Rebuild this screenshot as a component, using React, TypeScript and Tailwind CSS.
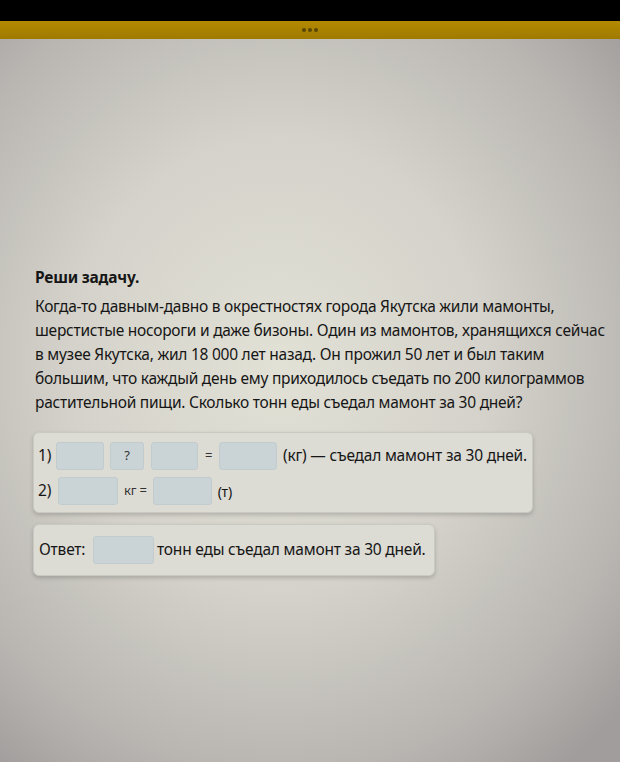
import React from "react";

const Inp = ({ w }: { w: string }) => (
  <div className={`${w} h-[28px] rounded-[3px] bg-[#cad3d6] border border-[#c2cbce]`} />
);

export default function App() {
  return (
    <div
      className="w-[620px] h-[762px] overflow-hidden flex flex-col text-[#161616]"
      style={{ fontFamily: '"Noto Sans", "Open Sans", sans-serif' }}
    >
      <div className="h-[21px] bg-black shrink-0" />
      <div className="h-[18px] shrink-0 bg-[linear-gradient(180deg,#b38a00,#9f7a00)] flex items-center justify-center gap-[2px]">
        <span className="w-[4px] h-[4px] rounded-full bg-[#5b4604]" />
        <span className="w-[4px] h-[4px] rounded-full bg-[#5b4604]" />
        <span className="w-[4px] h-[4px] rounded-full bg-[#5b4604]" />
      </div>
      <div className="flex-1 bg-[radial-gradient(ellipse_75%_70%_at_45%_45%,#e2e1d6_0%,#d4d2ca_45%,#b9b6b2_80%,#a09d9c_100%)] pl-[35px] pr-[10px] pt-[226px]">
        <div className="text-[15.5px] font-bold leading-[24px] tracking-[-0.2px]">Реши задачу.</div>
        <p className="mt-[5px] text-[15.5px] leading-[24px] tracking-[-0.25px]">
          Когда-то давным-давно в окрестностях города Якутска жили мамонты,
          <br />
          шерстистые носороги и даже бизоны. Один из мамонтов, хранящихся сейчас
          <br />
          в музее Якутска, жил 18 000 лет назад. Он прожил 50 лет и был таким
          <br />
          большим, что каждый день ему приходилось съедать по 200 килограммов
          <br />
          растительной пищи. Сколько тонн еды съедал мамонт за 30 дней?
        </p>

        <div className="mt-[18px] -ml-[2px] w-[500px] rounded-[6px] border border-[#c9c8c2] bg-[#dcdbd4] shadow-[0_2px_4px_rgba(0,0,0,0.18)] pl-[4px] pt-[9px] pb-[7px] flex flex-col gap-[7px]">
          <div className="flex items-center h-[28px] text-[15.5px] tracking-[-0.2px]">
            <span className="w-[18px]">1)</span>
            <Inp w="w-[48px]" />
            <div className="ml-[6px] w-[34px] h-[28px] rounded-[3px] bg-[#cad3d6] border border-[#c2cbce] flex items-center justify-center text-[13px] text-[#333]">?</div>
            <div className="ml-[7px]"><Inp w="w-[47px]" /></div>
            <span className="w-[21px] text-center text-[13px] text-[#333]">=</span>
            <Inp w="w-[58px]" />
            <span className="ml-[6px]">(кг) — съедал мамонт за 30 дней.</span>
          </div>
          <div className="flex items-center h-[28px] text-[15.5px] tracking-[-0.2px]">
            <span className="w-[20px]">2)</span>
            <Inp w="w-[60px]" />
            <span className="ml-[6px] mr-[6px] text-[13px] text-[#333]">кг =</span>
            <Inp w="w-[59px]" />
            <span className="ml-[6px] text-[14px]">(т)</span>
          </div>
        </div>

        <div className="mt-[11px] -ml-[2px] w-[402px] rounded-[6px] border border-[#c9c8c2] bg-[#dcdbd4] shadow-[0_2px_4px_rgba(0,0,0,0.18)] pl-[5px] h-[52px] flex items-center text-[15.5px] tracking-[-0.2px]">
          <span className="w-[54px]">Ответ:</span>
          <Inp w="w-[61px]" />
          <span className="ml-[3px]">тонн еды съедал мамонт за 30 дней.</span>
        </div>
      </div>
    </div>
  );
}
